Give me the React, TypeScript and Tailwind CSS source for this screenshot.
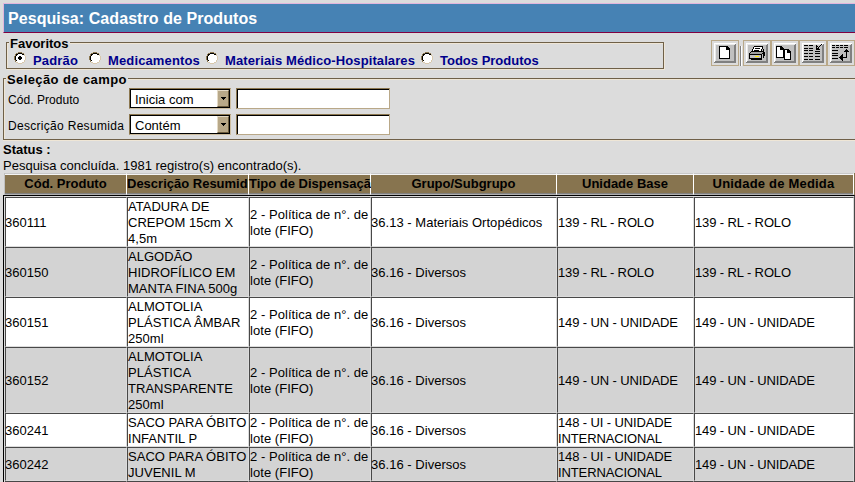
import React from "react";

const columns = [
  { label: "Cód. Produto", cls: "justify-center" },
  { label: "Descrição Resumid", cls: "justify-start" },
  { label: "Tipo de Dispensaçã", cls: "justify-start" },
  { label: "Grupo/Subgrupo", cls: "justify-center" },
  { label: "Unidade Base", cls: "justify-center" },
  { label: "Unidade de Medida", cls: "justify-center tracking-[0.2px]" },
];

const LOTE = ["2 - Política de n°. de", "lote (FIFO)"];
const DIV = ["36.16 - Diversos"];
const UN = ["149 - UN - UNIDADE"];
const RL = ["139 - RL - ROLO"];
const UI = ["148 - UI - UNIDADE", "INTERNACIONAL"];

const rows: { h: string; cells: string[][] }[] = [
  { h: "h-[50px]", cells: [["360111"], ["ATADURA DE", "CREPOM 15cm X", "4,5m"], LOTE, ["36.13 - Materiais Ortopédicos"], RL, RL] },
  { h: "h-[50px]", cells: [["360150"], ["ALGODÃO", "HIDROFÍLICO EM", "MANTA FINA 500g"], LOTE, DIV, RL, RL] },
  { h: "h-[50px]", cells: [["360151"], ["ALMOTOLIA", "PLÁSTICA ÂMBAR", "250ml"], LOTE, DIV, UN, UN] },
  { h: "h-[66px]", cells: [["360152"], ["ALMOTOLIA", "PLÁSTICA", "TRANSPARENTE", "250ml"], LOTE, DIV, UN, UN] },
  { h: "h-[34px]", cells: [["360241"], ["SACO PARA ÓBITO", "INFANTIL P"], LOTE, DIV, UI, UN] },
  { h: "h-[34px]", cells: [["360242"], ["SACO PARA ÓBITO", "JUVENIL M"], LOTE, DIV, UI, UN] },
  { h: "h-[34px]", cells: [[], [], [], [], [], []] },
];

const cellText = [
  "-ml-px",
  "tracking-[0.03px]",
  "tracking-[0.05px]",
  "-ml-px tracking-[0.03px]",
  "tracking-[-0.12px]",
  "tracking-[-0.12px]",
];

const GRID = "grid grid-cols-[122px_122px_122px_186px_137px_160px]";

function Radio({ checked }: { checked?: boolean }) {
  return (
    <svg width="12" height="12" viewBox="0 0 12 12" className="shrink-0" shapeRendering="crispEdges">
      <path d="M4 1h4v1h2v2h1v4h-1v2H8v1H4v-1H2V8H1V4h1V2h2z" fill="#fff" />
      <path d="M4 0h4v1H4zM2 1h2v1H2zM8 1h2v1H8zM1 2h1v2H1zM0 4h1v4H0zM1 8h1v2H1z" fill="#8b7750" />
      <path d="M4 1h4v1H4zM2 2h2v1H2zM8 2h2v1H8zM2 3h1v1H2zM1 4h1v4H1zM2 8h1v1H2z" fill="#000" />
      <path d="M10 2h1v2h-1zM11 4h1v4h-1zM10 8h1v2h-1zM8 10h2v1H8zM4 11h4v1H4zM2 10h2v1H2z" fill="#d8c8ac" />
      {checked && <path d="M5 4h2v1h1v2H7v1H5V7H4V5h1z" fill="#000" />}
    </svg>
  );
}

function ToolButton({ children }: { children: React.ReactNode }) {
  return (
    <div className="h-[26px] w-7 shrink-0 border border-[#b9a888]">
      <svg width="26" height="24" viewBox="1 1 26 24" shapeRendering="crispEdges">
        <path d="M3 3h22v20H3z" fill="#c0c0c0" />
        <path d="M3 3h22v1H4v19H3z" fill="#fff" />
        <path d="M4 4h20v1H5v17H4z" fill="#e8e8e8" />
        <path d="M24 4h1v19H3v-1h1v-1h19V5h1z" fill="#808080" />
        {children}
      </svg>
    </div>
  );
}

function Page({ x, y, w, h }: { x: number; y: number; w: number; h: number }) {
  return (
    <>
      <path d={`M${x} ${y}h${w - 3}l3 3v${h - 3}h-${w}z`} fill="#000" />
      <path d={`M${x + 1} ${y + 1}h${w - 5}v3h3v${h - 5}h-${w - 2}z`} fill="#fff" />
    </>
  );
}

function Toolbar() {
  return (
    <div className="flex mt-[7px]">
      <ToolButton>
        <Page x={8} y={6} w={11} h={13} />
      </ToolButton>
      <div className="ml-px mr-px mt-[6px] h-5 w-[2px] border-l border-r border-l-[#808080] border-r-white" />
      <ToolButton>
        <path d="M11 6h9v1h-9zM10 7h1v2h-1zM9 9h1v2H9zM19 7h1v2h-1zM18 9h1v2h-1zM8 11h12v1H8zM7 12h1v1H7zM6 13h1v6H6zM7 14h12v1H7zM19 13h1v1h-1zM20 9h1v9h-1zM21 12h1v4h-1zM7 18h12v2H8v-1H7zM18 15h1v4h-1z" fill="#000" />
        <path d="M11 7h8v2h-1v2H10V9h1z" fill="#fff" />
        <path d="M12 8h5v1h-5zM11 10h5v1h-5z" fill="#000" />
        <path d="M8 12h12v1h-1v1H7v-1h1z" fill="#a0a0a0" />
        <path d="M7 15h11v3H7z" fill="#c0c0c0" />
        <path d="M12 16h4v1h-4z" fill="#ffeb00" />
      </ToolButton>
      <ToolButton>
        <Page x={5} y={6} w={8} h={12} />
        <Page x={13} y={9} w={7} h={11} />
      </ToolButton>
      <ToolButton>
        <path d="M5 5h4v1H5zM10 5h4v1h-4zM5 8h4v1H5zM10 8h4v1h-4zM5 10h4v1H5zM10 10h4v1h-4zM5 13h4v1H5zM10 13h4v1h-4zM5 16h4v1H5zM10 16h4v1h-4zM5 19h4v1H5zM10 19h4v1h-4zM16 11h5v1h-5zM16 13h5v1h-5zM16 16h5v1h-5zM16 19h5v1h-5z" fill="#000" />
        <path d="M22 4h1v1h-1zM21 5h1v1h-1zM20 6h1v1h-1zM19 7h1v1h-1zM17 5h1v1h1v1h-1v1h2v1h1v1h-4z" fill="#000" />
      </ToolButton>
      <ToolButton>
        <path d="M5 5h3v1H5zM9 5h3v1H9zM13 5h3v1h-3zM17 5h4v1h-4zM5 7h3v1H5zM9 7h3v1H9zM13 7h3v1h-3zM17 7h4v1h-4zM5 10h6v1H5zM5 13h6v1H5zM5 15h6v1H5zM5 18h6v1H5z" fill="#000" />
        <path d="M19 10h1v8h-6v-1h5zM17 12v-1h1v-1h1V9h1v1h1v1h1v1zM16 14v7h-1v-1h-1v-1h-1v-1h-1v-1h1v-1h1v-1h1v-1z" fill="#000" />
      </ToolButton>
    </div>
  );
}

function Select({ value }: { value: string }) {
  return (
    <div className="h-[21px] w-[102px] shrink-0 border border-t-[#8b7750] border-l-[#8b7750] border-r-[#cdbd9f] border-b-[#cdbd9f]">
      <div className="flex h-full w-full border border-black bg-white">
        <div className="flex-1 pl-1 text-[13px] leading-[19px]">{value}</div>
        <div className="flex h-full w-[12px] items-center justify-center border border-t-[#e4dac6] border-l-[#e4dac6] border-r-[#6b5b3c] border-b-[#6b5b3c] bg-[#b8a888]">
          <svg width="5" height="3" viewBox="0 0 5 3" shapeRendering="crispEdges">
            <path d="M0 0h5v1H4v1H3v1H2V2H1V1H0z" fill="#000" />
          </svg>
        </div>
      </div>
    </div>
  );
}

function Input() {
  return (
    <div className="ml-[5px] h-[21px] w-[154px] border border-t-[#8b7750] border-l-[#8b7750] border-r-[#b9a888] border-b-[#b9a888]">
      <div className="h-full w-full border-t border-l border-black bg-white" />
    </div>
  );
}

export default function App() {
  return (
    <div className="h-[482px] w-[855px] overflow-hidden bg-[#dcdcdc] pt-[3px] font-['Liberation_Sans',Arial,sans-serif] text-[13px] leading-4 text-black whitespace-nowrap">
      <div className="ml-[3px] h-[30px] border-t border-l border-b border-t-[#e2b6dc] border-l-[#e2b6dc] border-b-[#800040] bg-[#4682b4] pl-1 text-[16px] font-bold leading-[29px] tracking-[0.07px] text-white">
        Pesquisa: Cadastro de Produtos
      </div>

      <div className="flex h-[45px]">
        <div className="relative ml-[6px] mt-[9px] h-[27px] w-[658px] shrink-0 border border-[#6f6048] shadow-[1px_1px_0_#efe6d6,inset_1px_1px_0_#efe6d6]">
          <div className="absolute -top-[7px] left-[2px] bg-[#dcdcdc] px-px font-bold leading-4">Favoritos</div>
          <div className="flex pt-[9px] font-bold text-[#00008b]">
            <div className="flex w-[75px] pl-[7px]">
              <Radio checked />
              <span className="pl-[7px] pt-px tracking-[0.15px]">Padrão</span>
            </div>
            <div className="flex w-[117px] pl-[7px]">
              <Radio />
              <span className="pl-[7px] pt-px tracking-[0.13px]">Medicamentos</span>
            </div>
            <div className="flex w-[215px] pl-[7px]">
              <Radio />
              <span className="pl-[7px] pt-px tracking-[0.1px]">Materiais Médico-Hospitalares</span>
            </div>
            <div className="flex pl-[7px]">
              <Radio />
              <span className="pl-[7px] pt-px">Todos Produtos</span>
            </div>
          </div>
        </div>
        <div className="ml-[47px]">
          <Toolbar />
        </div>
      </div>

      <div className="relative ml-[3px] h-[62px] border-t border-l border-b border-[#6f6048] shadow-[0_1px_0_#efe6d6,inset_1px_1px_0_#efe6d6]">
        <div className="absolute -top-[7px] left-[2px] bg-[#dcdcdc] px-px font-bold leading-4 tracking-[0.4px]">Seleção de campo</div>
        <div className="mt-[9px] flex h-[26px] pl-[4px]">
          <span className="w-[121px] shrink-0 pt-1 text-[12px] leading-4 tracking-[0.05px]">Cód. Produto</span>
          <Select value="Inicia com" />
          <Input />
        </div>
        <div className="flex h-[26px] pl-[4px]">
          <span className="w-[121px] shrink-0 pt-1 text-[12px] leading-4 tracking-[0.3px]">Descrição Resumida</span>
          <Select value="Contém" />
          <Input />
        </div>
      </div>

      <div className="mt-px h-8 pl-[3px]">
        <div className="pt-px font-bold">Status :</div>
        <div>Pesquisa concluída. 1981 registro(s) encontrado(s).</div>
      </div>

      <div className="flex pl-1">
        <div className={`${GRID} h-[22px] w-[850px] shrink-0 border-l border-[#c0c0c0]`}>
          {columns.map((c) => (
            <div key={c.label} className="border-t border-t-[#c8c8c8] border-r border-r-white border-b border-b-[#b0b0b0]">
              <div className={`flex h-full border-t border-t-[#f4f4f4] border-b border-b-[#808080] bg-[#87744f] font-bold leading-[18px] ${c.cls}`}>
                {c.label}
              </div>
            </div>
          ))}
        </div>
        <div className="h-[22px] w-px bg-[#87744f]" />
      </div>
      <div className="ml-[3px] w-[852px] border-t border-l border-r border-black border-r-[#484848]">
        <div className="border-t border-l border-[#dcdcdc]">
          {rows.map((r, i) => (
            <div key={i} className={`${GRID} ${r.h}`}>
              {r.cells.map((lines, j) => (
                <div
                  key={j}
                  className={`flex flex-col justify-center border border-t-[#484848] border-l-[#484848] border-r-[#dcdcdc] border-b-[#dcdcdc] ${i % 2 ? "bg-[#d3d3d3]" : "bg-white"}`}
                >
                  {lines.map((l, k) => (
                    <div key={k} className={`h-4 leading-[18px] ${cellText[j]}`}>
                      {l}
                    </div>
                  ))}
                </div>
              ))}
            </div>
          ))}
        </div>
      </div>
    </div>
  );
}
